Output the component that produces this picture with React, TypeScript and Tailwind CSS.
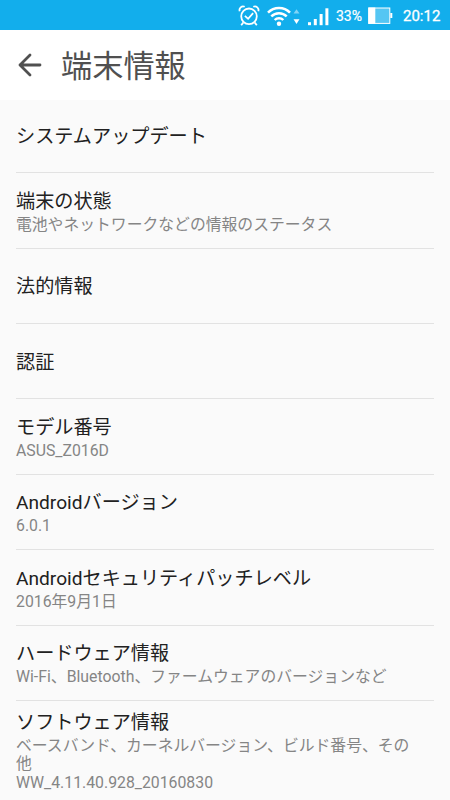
import { ReactNode } from "react";

type Item = {
  title: string
  summary?: string[]
}

const items: Item[] = [
  { title: "システムアップデート" },
  { title: "端末の状態", summary: ["電池やネットワークなどの情報のステータス"] },
  { title: "法的情報" },
  { title: "認証" },
  { title: "モデル番号", summary: ["ASUS_Z016D"] },
  { title: "Androidバージョン", summary: ["6.0.1"] },
  { title: "Androidセキュリティパッチレベル", summary: ["2016年9月1日"] },
  { title: "ハードウェア情報", summary: ["Wi-Fi、Bluetooth、ファームウェアのバージョンなど"] },
  {
    title: "ソフトウェア情報",
    summary: ["ベースバンド、カーネルバージョン、ビルド番号、その", "他", "WW_4.11.40.928_20160830"],
  },
]

function AlarmIcon() {
  return (
    <svg className="w-[22px] h-[22px]" viewBox="0 0 22 22" fill="none" stroke="white" strokeWidth="1.8">
      <circle cx="11" cy="11.3" r="7.8" />
      <path d="M1.7 6.2a3.6 3.6 0 0 1 5-4.4M20.3 6.2a3.6 3.6 0 0 0-5-4.4M5.2 17.6l-2 2.6M16.8 17.6l2 2.6" />
      <path d="M6.9 10.8l3.2 3 5-5.6" />
    </svg>
  )
}

function WifiIcon() {
  return (
    <svg className="w-[35px] h-[22px]" viewBox="0 0 35 22" fill="none">
      <g stroke="white" strokeWidth="2.5">
        <path d="M1 7.6a15.3 15.3 0 0 1 22 0" />
        <path d="M4.3 11.4a10.8 10.8 0 0 1 15.4 0" />
        <path d="M7.7 15a6 6 0 0 1 8.6 0" />
      </g>
      <circle cx="12" cy="18.7" r="2.2" fill="white" />
      <path d="M26.5 8.6h6l-3-4.4z" fill="#80d4f6" />
      <path d="M26.5 14.2h6l-3 4.8z" fill="white" />
    </svg>
  )
}

function SignalIcon() {
  return (
    <svg className="w-[21px] h-[18px]" viewBox="0 0 21 18" fill="white">
      <rect x="0" y="14.2" width="3" height="3" />
      <rect x="5.8" y="11" width="3" height="6.2" />
      <rect x="11.6" y="6" width="3" height="11.2" />
      <rect x="17.4" y="0.3" width="3" height="16.9" />
    </svg>
  )
}

function BatteryIcon() {
  return (
    <svg className="w-[25px] h-[18px]" viewBox="0 0 25 18">
      <rect x="0.8" y="1" width="21" height="15.4" fill="#55c6f3" stroke="white" strokeWidth="1" />
      <rect x="0.3" y="0.5" width="7" height="16.4" fill="white" />
      <rect x="22.3" y="6" width="2" height="5" fill="white" />
    </svg>
  )
}

function StatusBar() {
  return (
    <div className="h-[30px] bg-[#12aeec] flex items-center text-white">
      <div className="ml-[238px] mt-[2px]"><AlarmIcon /></div>
      <div className="ml-[7px] mt-px"><WifiIcon /></div>
      <div className="ml-[6px] mt-[4px]"><SignalIcon /></div>
      <span className="ml-[7px] w-[32px] text-[14px] mt-[3px] [-webkit-text-stroke:0.2px_white]">33%</span>
      <div className="mt-px"><BatteryIcon /></div>
      <span className="ml-[10px] text-[15px] mt-[3px] [-webkit-text-stroke:0.3px_white]">20:12</span>
    </div>
  )
}

function Row({ item, children }: { item: Item; children?: ReactNode }) {
  return (
    <li className="mx-4 h-[75.4px] first:h-[73.3px] last:h-auto border-b border-[#e2e2e2] last:border-b-0 flex flex-col justify-center pt-[3px] first:pt-px last:pt-[10px]">
      <p className="text-[19.15px] leading-[24px] text-[#212121]">{item.title}</p>
      {children}
    </li>
  )
}

export default function App() {
  return (
    <div lang="ja" className="w-[450px] h-[800px] overflow-hidden bg-[#fafafa] whitespace-nowrap font-[Roboto,'Noto_Sans_CJK_JP',sans-serif]">
      <StatusBar />
      <header className="h-[70px] bg-white flex items-center text-[#505050]">
        <svg className="ml-[18px] w-6 h-6" viewBox="0 0 24 24" fill="none" stroke="currentColor" strokeWidth="2.8" strokeLinecap="round" strokeLinejoin="round">
          <path d="M22 12H2M12 2L2 12l10 10" />
        </svg>
        <h1 className="ml-[19px] mt-1 text-[31.2px] leading-[40px]">端末情報</h1>
      </header>
      <ul>
        {items.map((item) => (
          <Row key={item.title} item={item}>
            {item.summary && (
              <div className="text-[15.82px] leading-[18.4px] mt-[2px] text-[#858585]">
                {item.summary.map((line) => (
                  <p key={line}>{line}</p>
                ))}
              </div>
            )}
          </Row>
        ))}
      </ul>
    </div>
  )
}
